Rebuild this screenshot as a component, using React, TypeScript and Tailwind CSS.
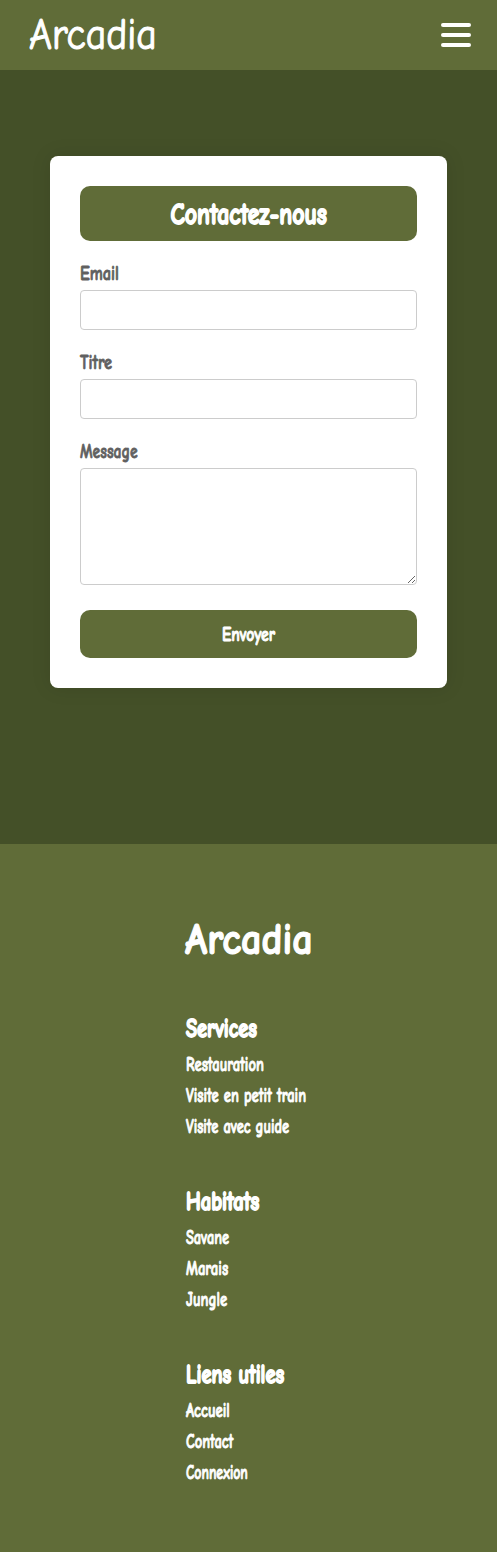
import { useLayoutEffect, useRef } from 'react';

const groups = [
  { title: 'Services', width: 71, links: [['Restauration', 78], ['Visite en petit train', 120], ['Visite avec guide', 103]] },
  { title: 'Habitats', width: 73, links: [['Savane', 43], ['Marais', 42], ['Jungle', 41]] },
  { title: 'Liens utiles', width: 98, links: [['Accueil', 44], ['Contact', 47], ['Connexion', 62]] },
] as { title: string; width: number; links: [string, number][] }[];

// Condenses its text horizontally to the given width.
function Fit({ children, width, center = false }: { children: string; width: number; center?: boolean }) {
  const ref = useRef<HTMLSpanElement>(null);
  useLayoutEffect(() => {
    const el = ref.current;
    if (el) el.style.transform = `scaleX(${width / el.offsetWidth})`;
  }, [width]);
  return (
    <span ref={ref} className={center ? 'inline-block origin-center whitespace-nowrap' : 'inline-block origin-left whitespace-nowrap'}>
      {children}
    </span>
  );
}

function Label({ children, width }: { children: string; width: number }) {
  return (
    <span className="block h-6 text-[21px] leading-[25px] text-[#606060] [-webkit-text-stroke:0.8px_#606060]">
      <Fit width={width}>{children}</Fit>
    </span>
  );
}

export default function App() {
  return (
    <div className="flex min-h-[1552px] flex-col bg-[#445028] font-['Comic_Neue','Lato',cursive] font-bold">
      <header className="flex h-[70px] items-center justify-between bg-[#606c38] pr-[26px] pl-[29px] text-white">
        <a className="text-[44px] leading-[70px] font-normal [-webkit-text-stroke:1.1px_white]">
          <Fit width={128}>Arcadia</Fit>
        </a>
        <button aria-label="Menu" className="flex w-[30px] flex-col gap-[6px]">
          <span className="h-1 rounded-[2px] bg-white" />
          <span className="h-1 rounded-[2px] bg-white" />
          <span className="h-1 rounded-[2px] bg-white" />
        </button>
      </header>
      <main className="h-[774px] px-[50px] pt-[86px]">
        <form className="h-[532px] rounded-lg bg-white p-[30px] shadow-[0_0_20px_rgba(0,0,0,0.1)]">
          <h1 className="mb-5 h-[55px] rounded-[10px] bg-[#606c38] text-center text-[30px] leading-[58px] text-white [-webkit-text-stroke:1.8px_white]">
            <Fit width={156} center>Contactez-nous</Fit>
          </h1>
          <label className="mb-5 block">
            <Label width={39}>Email</Label>
            <input className="mt-[5px] block h-10 w-full rounded border border-[#ccc] px-2 outline-none" />
          </label>
          <label className="mb-5 block">
            <Label width={32}>Titre</Label>
            <input className="mt-[5px] block h-10 w-full rounded border border-[#ccc] px-2 outline-none" />
          </label>
          <label className="mb-[25px] block">
            <Label width={58}>Message</Label>
            <textarea className="mt-[5px] block h-[117px] w-full resize rounded border border-[#ccc] p-2 outline-none" />
          </label>
          <button type="button" className="block h-12 w-full rounded-[10px] bg-[#606c38] text-[21px] leading-[48px] text-white [-webkit-text-stroke:1px_white]">
            <Fit width={53} center>Envoyer</Fit>
          </button>
        </form>
      </main>
      <footer className="flex h-[708px] flex-col bg-[#606c38] pt-[61px] pl-[185px] text-white">
        <div className="mb-[39px] h-[70px] text-[44px] leading-[70px] [-webkit-text-stroke:1.2px_white]">
          <Fit width={128}>Arcadia</Fit>
        </div>
        <div className="flex flex-col gap-[45px] pl-px">
          {groups.map((g) => (
            <section key={g.title}>
              <h2 className="h-[35px] text-[26px] leading-[30px] [-webkit-text-stroke:1.8px_white]">
                <Fit width={g.width}>{g.title}</Fit>
              </h2>
              <ul>
                {g.links.map(([label, width]) => (
                  <li key={label} className="h-[31px] text-[20px] leading-[32px] [-webkit-text-stroke:0.9px_white]">
                    <a><Fit width={width}>{label}</Fit></a>
                  </li>
                ))}
              </ul>
            </section>
          ))}
        </div>
      </footer>
    </div>
  );
}
